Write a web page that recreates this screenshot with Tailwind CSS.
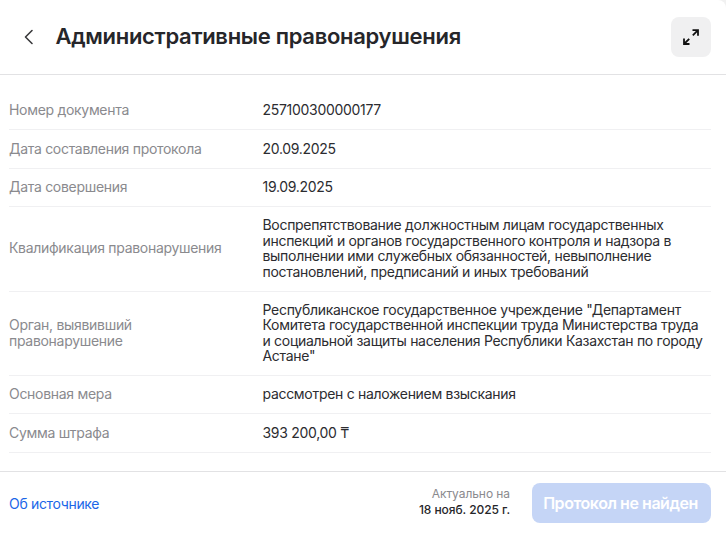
<!DOCTYPE html>
<html lang="ru">
<head>
<meta charset="utf-8">
<script src="https://cdn.jsdelivr.net/npm/@tailwindcss/browser@4"></script>
</head>
<body class="m-0 bg-[#f1f1f1] font-['Inter',sans-serif]">
<div class="flex h-[534px] w-[726px] flex-col overflow-hidden rounded-tr-[8px] bg-white">
  <header class="flex h-[75px] shrink-0 items-center border-b border-[#e2e2e4] pl-[20px] pr-[15px]">
    <svg class="h-[18px] w-[18px] shrink-0" viewBox="0 0 18 18" fill="none" stroke="#3a3a3c" stroke-width="1.6" stroke-linecap="round" stroke-linejoin="round"><path d="M12 2.5 5.5 9 12 15.5"/></svg>
    <h1 class="mt-[-2px] ml-[17.5px] flex-1 text-[22px] leading-[28px] font-semibold tracking-[-0.3px] text-[#26262a]">Административные правонарушения</h1>
    <button class="flex h-[40px] w-[40px] items-center justify-center rounded-[8px] bg-[#f0f0f1]">
      <svg class="mt-[-1px] h-[18px] w-[18px]" viewBox="0 0 18 18" fill="none" stroke="#111" stroke-width="1.8"><path d="M10.5 2.2H16V7.7M16 2.2 10.8 7.4M7.5 16H2V10.5M2 16l5.2-5.2"/></svg>
    </button>
  </header>
  <main class="flex-1 pr-[15px] pl-[9px] pt-[17px] text-[14px] leading-[15.4px] tracking-[-0.3px]">
    <dl class="m-0">
      <div class="flex items-center border-b border-[#f0f0f2] pt-[10.2px] pb-[11.8px]"><dt class="w-[253.5px] shrink-0 text-[#8a8a8e]">Номер документа</dt><dd class="text-[#2c2c30]">257100300000177</dd></div>
      <div class="flex items-center border-b border-[#f0f0f2] pt-[10.2px] pb-[11.8px]"><dt class="w-[253.5px] shrink-0 text-[#8a8a8e]">Дата составления протокола</dt><dd class="text-[#2c2c30]">20.09.2025</dd></div>
      <div class="flex items-center border-b border-[#f0f0f2] pt-[10.2px] pb-[11.8px]"><dt class="w-[253.5px] shrink-0 text-[#8a8a8e]">Дата совершения</dt><dd class="text-[#2c2c30]">19.09.2025</dd></div>
      <div class="flex items-center border-b border-[#f0f0f2] pt-[10.2px] pb-[11.8px]"><dt class="w-[253.5px] shrink-0 text-[#8a8a8e]">Квалификация правонарушения</dt><dd class="text-[#2c2c30]">Воспрепятствование должностным лицам государственных<br>инспекций и органов государственного контроля и надзора в<br>выполнении ими служебных обязанностей, невыполнение<br>постановлений, предписаний и иных требований</dd></div>
      <div class="flex items-center border-b border-[#f0f0f2] pt-[10.2px] pb-[11.8px]"><dt class="w-[253.5px] shrink-0 text-[#8a8a8e]">Орган, выявивший<br>правонарушение</dt><dd class="text-[#2c2c30]">Республиканское государственное учреждение "Департамент<br>Комитета государственной инспекции труда Министерства труда<br>и социальной защиты населения Республики Казахстан по городу<br>Астане"</dd></div>
      <div class="flex items-center border-b border-[#f0f0f2] pt-[10px] pb-[11.6px]"><dt class="w-[253.5px] shrink-0 text-[#8a8a8e]">Основная мера</dt><dd class="text-[#2c2c30]">рассмотрен с наложением взыскания</dd></div>
      <div class="flex items-center border-b border-[#f0f0f2] pt-[10.2px] pb-[12.2px]"><dt class="w-[253.5px] shrink-0 text-[#8a8a8e]">Сумма штрафа</dt><dd class="text-[#2c2c30]">393 200,00 ₸</dd></div>
    </dl>
  </main>
  <footer class="flex h-[63px] shrink-0 items-center border-t border-[#e2e2e4] pl-[9px] pr-[15px]">
    <a class="flex-1 text-[14px] tracking-[-0.33px] text-[#1a66e8]">Об источнике</a>
    <div class="mt-[-2px] mr-[22px] text-right text-[12px] leading-[16px] tracking-[-0.07px]">
      <div class="text-[#8a8a8e]">Актуально на</div>
      <div class="font-medium text-[#26262a]">18 нояб. 2025 г.</div>
    </div>
    <button class="h-[40px] w-[179px] rounded-[8px] bg-[#c5d5f6] pr-[2px] text-[16px] font-semibold tracking-[-0.45px] text-white">Протокол не найден</button>
  </footer>
</div>
</body>
</html>
